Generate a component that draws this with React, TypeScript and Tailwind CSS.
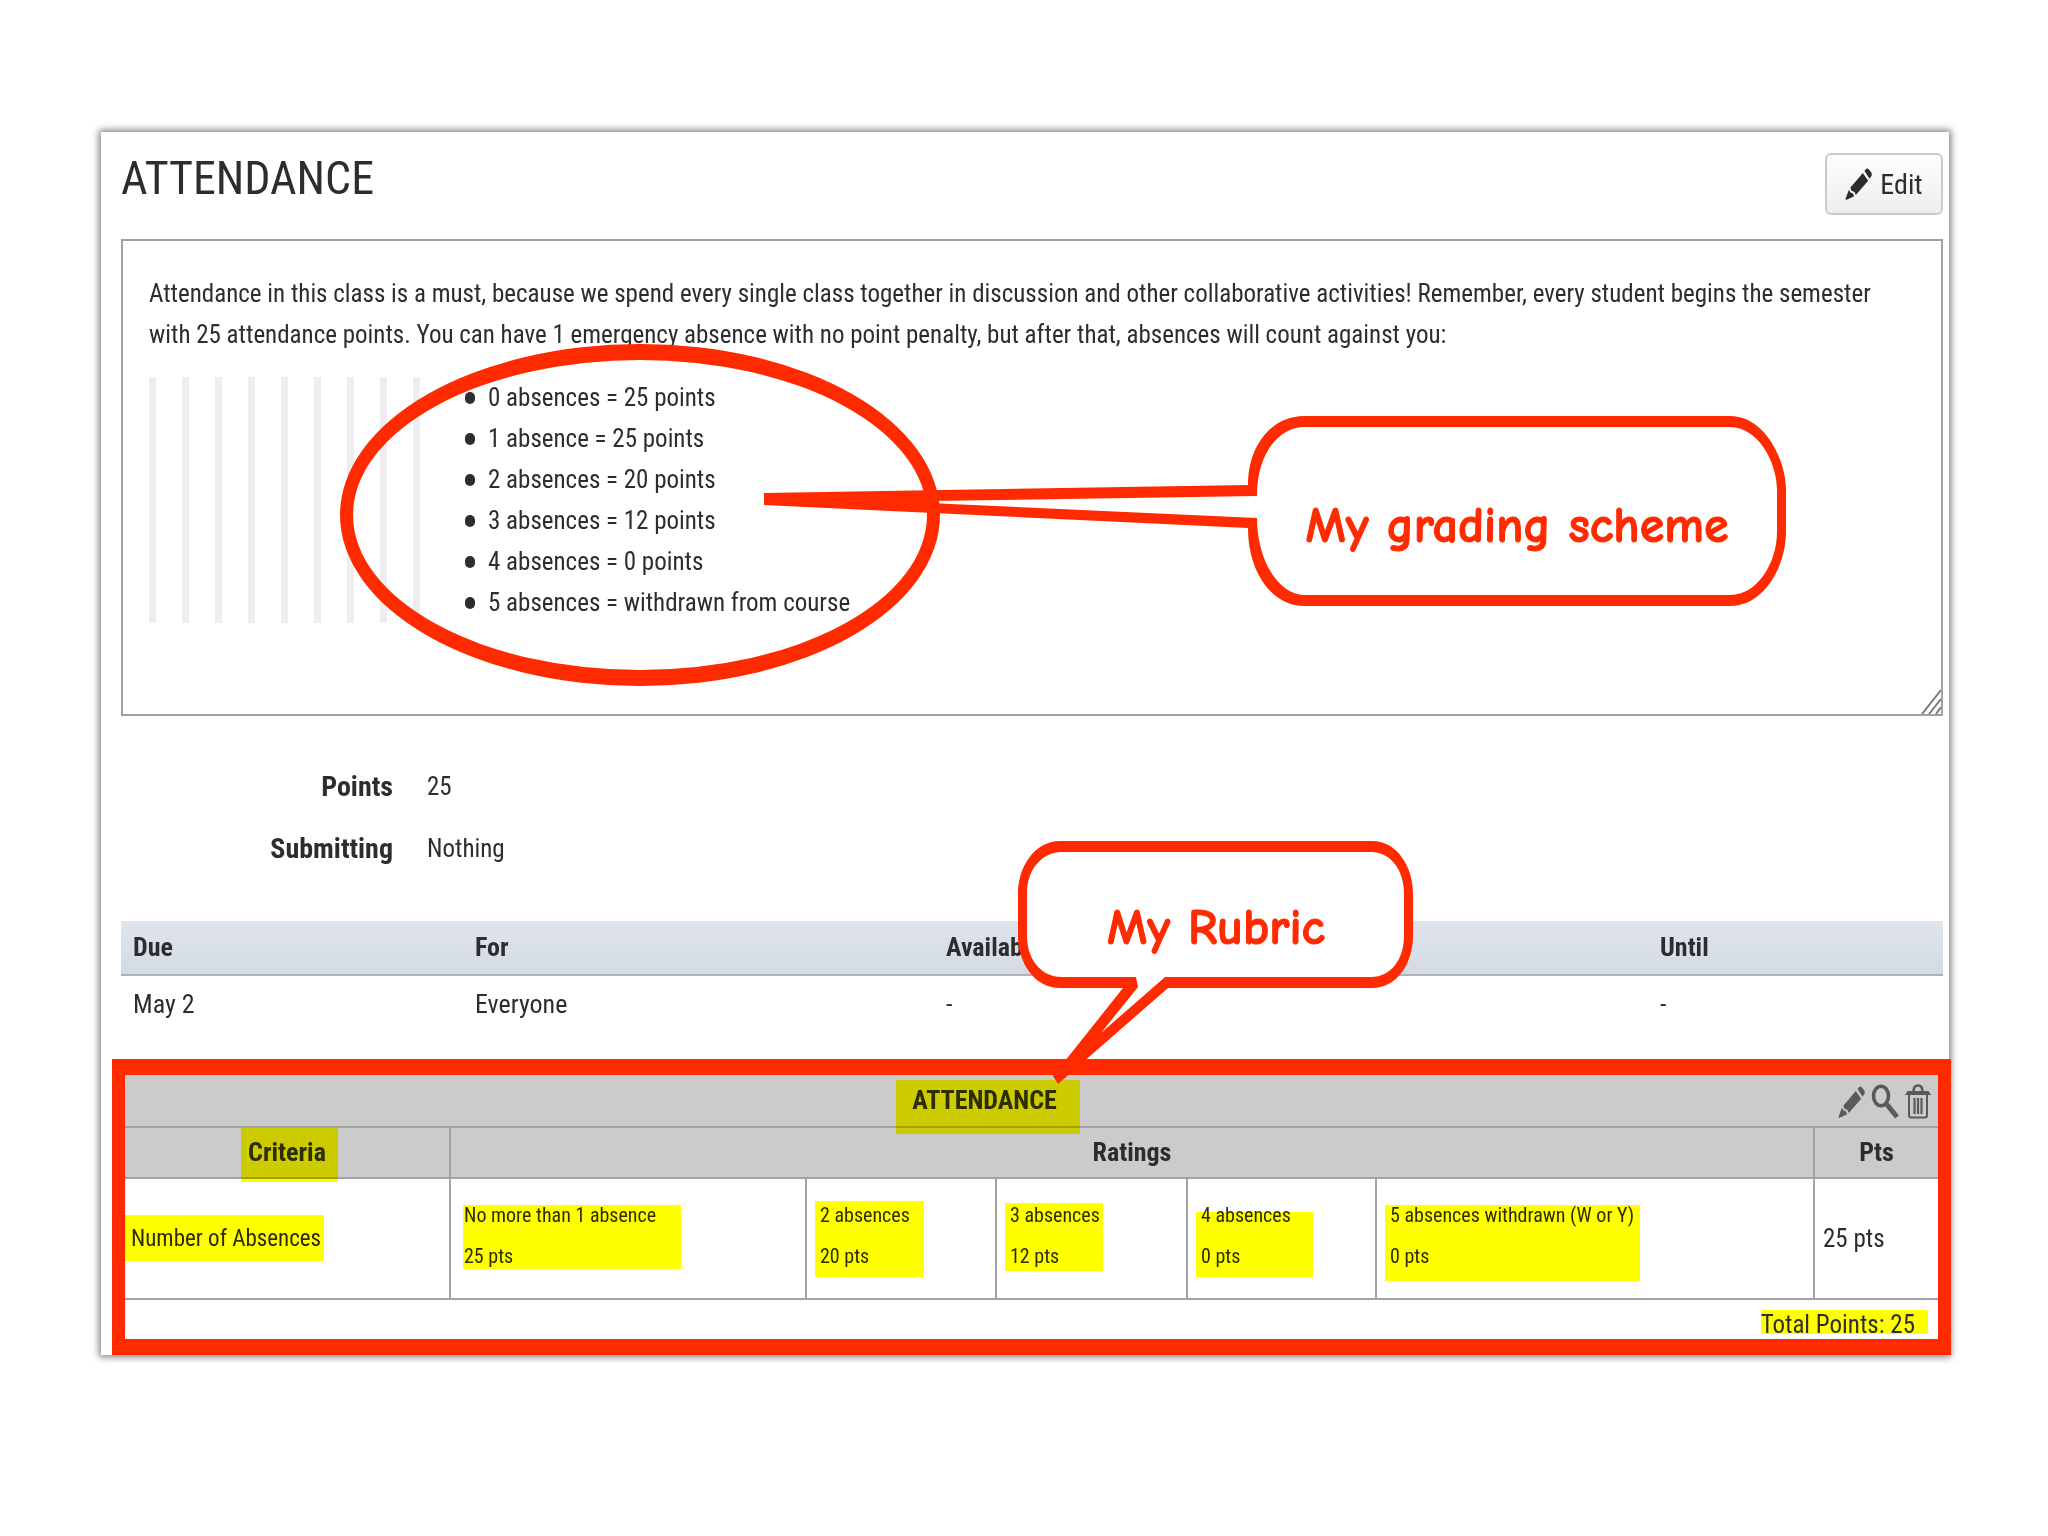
const scheme = [
  "0 absences = 25 points",
  "1 absence = 25 points",
  "2 absences = 20 points",
  "3 absences = 12 points",
  "4 absences = 0 points",
  "5 absences = withdrawn from course",
];

const bars = [0, 1, 2, 3, 4, 5, 6, 7, 8];

const ratings = [
  { label: "No more than 1 absence", points: "25 pts", mark: "left-3 top-[26px] w-[218px] h-[64px]" },
  { label: "2 absences", points: "20 pts", mark: "left-2 top-[22px] w-[109px] h-[76px]" },
  { label: "3 absences", points: "12 pts", mark: "left-2 top-[24px] w-[98px] h-[68px]" },
  { label: "4 absences", points: "0 pts", mark: "left-2 top-[33px] w-[117px] h-[65px]" },
  { label: "5 absences withdrawn (W or Y)", points: "0 pts", mark: "left-2 top-[26px] w-[255px] h-[76px]" },
];

function Mark({ className }: { className: string }) {
  return <span aria-hidden="true" className={"absolute bg-[#ffff00] mix-blend-multiply " + className} />;
}

function Pencil({ className }: { className: string }) {
  return (
    <svg viewBox="0 0 27 32" fill="currentColor" className={className} aria-hidden="true">
      <path d="M19.500 3 L21 1 Q22 0 23.500 1 L26 4 Q27.300 6 26.500 8 L24.500 10.800 Z" />
      <path d="M17.800 5 L23.200 12.800 L10.800 27 L9.500 24 L6.500 22.800 L5.300 19.800 Z" />
      <path d="M4 21.500 L5.200 24.200 L8 25.500 L9.200 28.300 L1 32 L0.500 31 Z" />
    </svg>
  );
}

function Magnifier({ className }: { className: string }) {
  return (
    <svg viewBox="0 0 28 35" fill="none" stroke="currentColor" className={className} aria-hidden="true">
      <ellipse cx="10" cy="12" rx="7.500" ry="9.800" strokeWidth="3.600" />
      <path d="M16 20.500 L26 33" strokeWidth="5" />
    </svg>
  );
}

function Trash({ className }: { className: string }) {
  return (
    <svg viewBox="0 0 26 35" fill="none" stroke="currentColor" className={className} aria-hidden="true">
      <path d="M8.500 7.500 Q8.500 1.500 13 1.500 Q17.500 1.500 17.500 7.500" strokeWidth="2.600" />
      <path d="M0 11 L2.500 7 H23.500 L26 11 Z" fill="currentColor" stroke="none" />
      <path d="M4 11 V31 Q4 33.500 6 33.500 H20 Q22 33.500 22 31 V11" strokeWidth="2" />
      <path d="M9.500 14 V30 M13 14 V30 M16.500 14 V30" strokeWidth="2.200" />
    </svg>
  );
}

function SchemeCallout() {
  return (
    <div className="pointer-events-none absolute left-[641px] top-[174px] z-10 h-[192px] w-[1024px]">
      <svg viewBox="764 415 1024 192" className="absolute inset-0 h-full w-full" aria-hidden="true">
        <path
          fill="#ff2a00"
          fillRule="evenodd"
          d="M764 493 L1248 485 C1248 445 1272 416 1304 416 H1730 C1765 416 1786 460 1786 490 V532 C1786 565 1765 606 1730 606 H1304 C1272 606 1248 572 1248 528 L764 505 Z M928 501 L1257 496 C1257 452 1280 427 1304 427 H1730 C1758 427 1777 462 1777 490 V532 C1777 562 1758 595 1730 595 H1304 C1280 595 1257 562 1257 518 L928 503 Z"
        />
      </svg>
      <p className="absolute left-[484px] top-[77px] w-[538px] text-center font-['Comic_Sans_MS','Comic_Neue',Lato,sans-serif] text-[50px] leading-[68px] font-bold text-[#ff2a00] [-webkit-text-stroke:1px_#ff2a00]">
        My grading scheme
      </p>
    </div>
  );
}

function RubricCallout() {
  return (
    <div className="pointer-events-none absolute left-[897px] top-[-81px] z-10 h-[245px] w-[396px]">
      <svg viewBox="1018 840 396 245" className="absolute inset-0 h-full w-full" aria-hidden="true">
        <path
          fill="#ffffff"
          d="M1060 846 H1372 C1395 846 1408 870 1408 893 V936 C1408 960 1395 982 1372 982 H1165 L1101 1040 L1137 982 H1060 C1037 982 1023 960 1023 936 V893 C1023 870 1037 846 1060 846 Z"
        />
        <path
          fill="#ff2a00"
          fillRule="evenodd"
          d="M1060 841 H1372 C1398 841 1413 868 1413 893 V936 C1413 962 1398 988 1372 988 H1168 L1058 1084 L1053 1076 L1123 988 H1060 C1034 988 1018 962 1018 936 V893 C1018 868 1034 841 1060 841 Z M1062 852 C1040 852 1027 872 1027 893 V936 C1027 958 1040 977 1062 977 H1136 L1138 987 L1101 1033 L1165 977 H1371 C1392 977 1404 958 1404 936 V893 C1404 872 1392 852 1371 852 Z"
        />
      </svg>
      <p className="absolute inset-x-[80px] top-[54px] text-center font-['Comic_Sans_MS','Comic_Neue',Lato,sans-serif] text-[50px] leading-[68px] font-bold text-[#ff2a00] [-webkit-text-stroke:1px_#ff2a00]">
        My Rubric
      </p>
    </div>
  );
}

export default function App() {
  return (
    <div className="min-h-screen bg-white pt-[132px] pr-[99px] pb-[180px] pl-[101px] font-['Roboto_Condensed','Liberation_Sans',Arial,sans-serif] text-[25px] leading-[41px] text-[#2d2d2f]">
      <main className="bg-white pt-[21px] pl-[20px] shadow-[0_0_7px_2px_rgba(0,0,0,0.5)]">
        <div className="pr-[6px]">
          <header className="flex items-start justify-between">
            <h1 className="text-[46px] leading-[50px]">ATTENDANCE</h1>
            <button
              type="button"
              className="flex h-[62px] w-[118px] items-center justify-center gap-2 rounded-md border-2 border-[#c9c9cb] bg-gradient-to-b from-white to-[#ededee] text-[28px]"
            >
              <Pencil className="h-8 w-[27px]" />
              Edit
            </button>
          </header>

          <section className="relative mt-6 h-[477px] border-2 border-[#a0a0a2] px-[26px] pt-[32px]">
            <p>
              Attendance in this class is a must, because we spend every single class together in discussion and other collaborative activities! Remember, every student begins the semester with 25 attendance points. You can have 1 emergency absence with no point penalty, but after that, absences will count against you:
            </p>
            <div className="mt-[22px] flex">
              <div className="flex w-[312px] gap-[26px]" aria-hidden="true">
                {bars.map((b) => (
                  <span key={b} className="w-[7px] bg-[#efedef]" />
                ))}
              </div>
              <ul>
                {scheme.map((line) => (
                  <li key={line} className="flex items-center gap-[13px]">
                    <span className="ml-1 h-3 w-[10px] rounded-full bg-[#2d2d2f]" />
                    {line}
                  </li>
                ))}
              </ul>
            </div>
            <svg viewBox="340 344 600 343" className="pointer-events-none absolute left-[217px] top-[103px] h-[343px] w-[600px]" aria-hidden="true">
              <path
                fill="#ff2a00"
                fillRule="evenodd"
                d="M340 515 A300 171 0 1 1 940 515 A300 171 0 1 1 340 515 Z M353 515 A287 155 0 1 0 927 515 A287 155 0 1 0 353 515 Z"
              />
            </svg>
            <SchemeCallout />
            <svg viewBox="0 0 20 25" className="absolute right-0 bottom-0 h-[25px] w-5" stroke="#77777a" strokeWidth="2" aria-hidden="true">
              <path d="M1 25 L20 1 M8 25 L20 10 M15 25 L20 18" fill="none" />
            </svg>
          </section>

          <dl className="mt-[50px] grid grid-cols-[272px_1fr] gap-x-[34px] gap-y-[21px]">
            <dt className="text-right text-[28px] font-bold">Points</dt>
            <dd>25</dd>
            <dt className="text-right text-[28px] font-bold">Submitting</dt>
            <dd>Nothing</dd>
          </dl>

          <section className="relative mt-[52px]">
            <table className="w-full table-fixed border-separate border-spacing-0 text-left text-[26px]">
              <thead>
                <tr className="bg-gradient-to-b from-[#e0e5ec] to-[#d3dae1]">
                  <th className="h-[55px] w-[342px] border-b-2 border-[#aeb2ba] pl-3">Due</th>
                  <th className="w-[471px] border-b-2 border-[#aeb2ba] pl-3">For</th>
                  <th className="w-[714px] border-b-2 border-[#aeb2ba] pl-3">Available</th>
                  <th className="border-b-2 border-[#aeb2ba] pl-3">Until</th>
                </tr>
              </thead>
              <tbody>
                <tr>
                  <td className="h-[56px] pl-3">May 2</td>
                  <td className="pl-3">Everyone</td>
                  <td className="pl-3">-</td>
                  <td className="pl-3">-</td>
                </tr>
              </tbody>
            </table>
            <RubricCallout />
          </section>
        </div>

        <section className="mt-[27px] -mr-[2px] -ml-[9px] border-x-[13px] border-y-[16px] border-[#ff2a00] bg-white">
          <table className="w-full table-fixed border-separate border-spacing-0">
            <colgroup>
              <col className="w-[326px]" />
              <col className="w-[356px]" />
              <col className="w-[190px]" />
              <col className="w-[191px]" />
              <col className="w-[189px]" />
              <col />
              <col className="w-[123px]" />
            </colgroup>
            <thead className="bg-[#cbcbcc] text-[26px]">
              <tr>
                <th colSpan={7} className="relative h-[53px] border-b-2 border-[#a3a3a6]">
                  <span className="relative inline-block pr-[94px]">
                    ATTENDANCE
                    <Mark className="-left-4 top-0 h-[54px] w-[184px]" />
                  </span>
                  <span className="absolute top-[9px] right-[7px] flex items-center gap-[6px] text-[#5a5a5c]">
                    <button type="button" aria-label="Edit rubric"><Pencil className="h-8 w-[27px]" /></button>
                    <button type="button" aria-label="Find rubric"><Magnifier className="h-[35px] w-7" /></button>
                    <button type="button" aria-label="Delete rubric"><Trash className="h-[35px] w-[26px]" /></button>
                  </span>
                </th>
              </tr>
              <tr>
                <th className="relative h-[51px] border-r-2 border-b-2 border-[#a3a3a6]">
                  Criteria
                  <Mark className="left-[116px] top-0 h-[54px] w-[97px]" />
                </th>
                <th colSpan={5} className="border-r-2 border-b-2 border-[#a3a3a6]">Ratings</th>
                <th className="border-b-2 border-[#a3a3a6]">Pts</th>
              </tr>
            </thead>
            <tbody>
              <tr>
                <td className="relative h-[121px] border-r-2 border-b-2 border-[#a3a3a6] pl-[6px] text-[23px]">
                  Number of Absences
                  <Mark className="left-0 top-[36px] h-[46px] w-[199px]" />
                </td>
                {ratings.map((r) => (
                  <td key={r.label} className="relative border-r-2 border-b-2 border-[#a3a3a6] pb-[6px] pl-[13px] text-[20px] whitespace-nowrap">
                    <p>{r.label}</p>
                    <p>{r.points}</p>
                    <Mark className={r.mark} />
                  </td>
                ))}
                <td className="border-b-2 border-[#a3a3a6] pl-2">25 pts</td>
              </tr>
              <tr>
                <td colSpan={7} className="relative h-[39px] pt-[10px] pr-[23px] text-right leading-[29px]">
                  <Mark className="right-[10px] top-[10px] h-6 w-[167px]" />
                  <span className="relative">Total Points: 25</span>
                </td>
              </tr>
            </tbody>
          </table>
        </section>
      </main>
    </div>
  );
}
